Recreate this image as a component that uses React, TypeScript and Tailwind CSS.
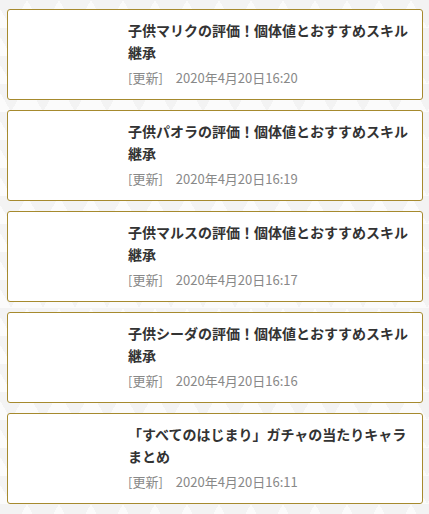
import React from "react";

type Article = {
  title: string;
  updated: string;
};

const articles: Article[] = [
  { title: "子供マリクの評価！個体値とおすすめスキル継承", updated: "2020年4月20日16:20" },
  { title: "子供パオラの評価！個体値とおすすめスキル継承", updated: "2020年4月20日16:19" },
  { title: "子供マルスの評価！個体値とおすすめスキル継承", updated: "2020年4月20日16:17" },
  { title: "子供シーダの評価！個体値とおすすめスキル継承", updated: "2020年4月20日16:16" },
  { title: "「すべてのはじまり」ガチャの当たりキャラまとめ", updated: "2020年4月20日16:11" },
];

const ArticleCard: React.FC<{ article: Article }> = ({ article }) => (
  <a
    href="#"
    className="flex bg-white border border-[#a68a2e] rounded-[3px] pt-[9px] pb-[10px] pl-[10px] pr-[10px]"
  >
    {/* thumbnail slot (image not loaded) */}
    <div className="w-[100px] shrink-0" />
    <div className="ml-[10px] flex-1 min-w-0">
      <div className="text-[14px] leading-[22px] font-bold text-[#333]">
        {article.title}
      </div>
      <div className="mt-[4px] text-[13px] leading-[22px] text-[#888]">
        [更新]　{article.updated}
      </div>
    </div>
  </a>
);

const App: React.FC = () => {
  return (
    <div className="min-h-[514px] font-['Noto_Sans_CJK_JP','Noto_Sans',sans-serif] bg-[#f3f3f3] [background-image:conic-gradient(from_150deg_at_50%_0,#fbfbfb_60deg,transparent_0)] [background-size:32px_28px] [background-position:11px_0]">
      <div className="flex flex-col gap-[10px] pt-[9px] pb-[10px] ml-[7px] mr-[6px]">
        {articles.map((a) => (
          <ArticleCard key={a.updated} article={a} />
        ))}
      </div>
    </div>
  );
};

export default App;
